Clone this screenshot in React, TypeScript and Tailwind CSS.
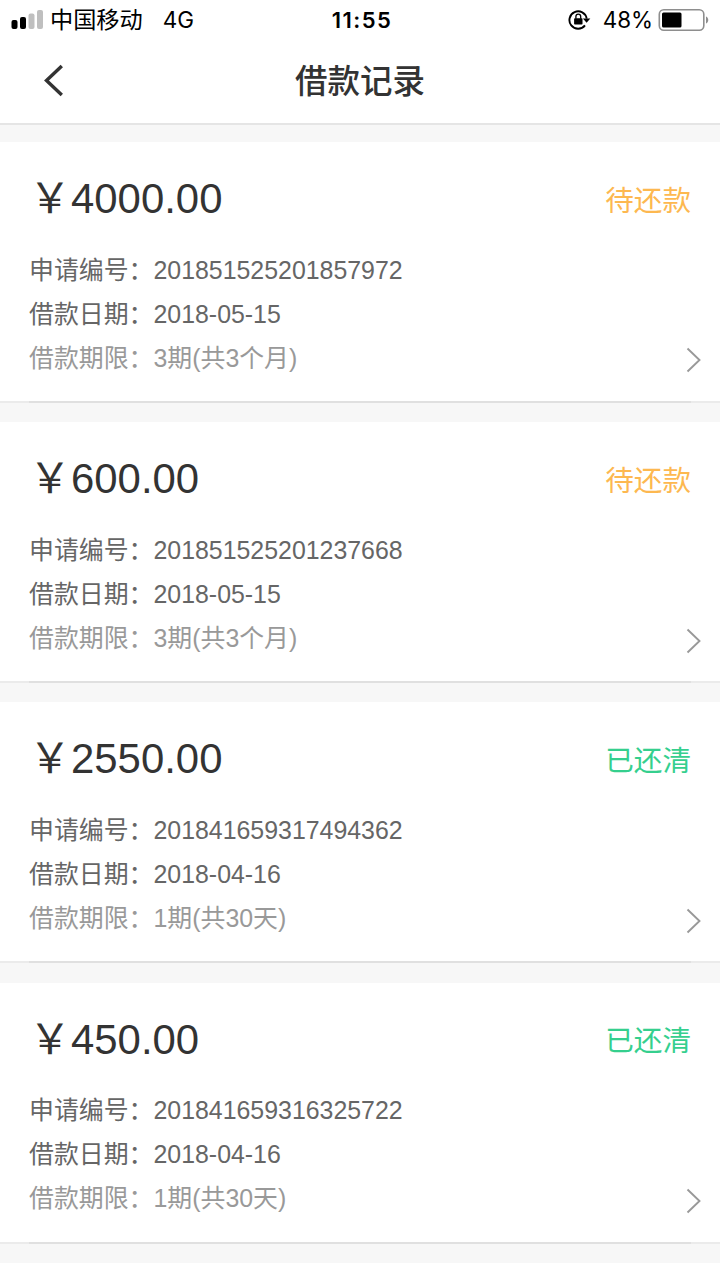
type LoanStatus = "pending" | "cleared";

interface Loan {
  amount: string;
  status: LoanStatus;
  number: string;
  date: string;
  term: string;
}

const loans: Loan[] = [
  { amount: "4000.00", status: "pending", number: "201851525201857972", date: "2018-05-15", term: "3期(共3个月)" },
  { amount: "600.00", status: "pending", number: "201851525201237668", date: "2018-05-15", term: "3期(共3个月)" },
  { amount: "2550.00", status: "cleared", number: "201841659317494362", date: "2018-04-16", term: "1期(共30天)" },
  { amount: "450.00", status: "cleared", number: "201841659316325722", date: "2018-04-16", term: "1期(共30天)" },
];

const statusText = { pending: "待还款", cleared: "已还清" };
const statusColor = { pending: "text-[#fdb850]", cleared: "text-[#35cf8e]" };

function StatusBar() {
  return (
    <div className="flex h-10 items-center justify-between pl-[11px] pr-[10px] font-['Inter','Noto_Sans_CJK_SC',sans-serif] text-[23px] text-black">
      <div className="flex w-[260px] items-center">
        <svg width="33" height="20" viewBox="0 0 33 20">
          <rect x="0.5" y="10" width="6" height="9" rx="2" fill="#000" />
          <rect x="9" y="7" width="6" height="12" rx="2" fill="#000" />
          <rect x="17.5" y="3.5" width="6" height="15.5" rx="2" fill="#bfbfbf" />
          <rect x="26" y="0" width="6" height="19" rx="2" fill="#bfbfbf" />
        </svg>
        <span className="ml-[6px] text-[23.2px]">中国移动</span>
        <span className="ml-[20px] text-[22.5px]">4G</span>
      </div>
      <span className="pl-[3px] text-[22px] font-semibold tracking-[1.4px]">11:55</span>
      <div className="flex w-[260px] items-center justify-end">
        <svg width="23" height="20" viewBox="0 0 23 20" fill="none">
          <path d="M17 15.4A8.7 8.7 0 1 1 18.7 8.6" stroke="#000" strokeWidth="1.9" />
          <path d="M14.9 8.4h7.4L18.6 12.8z" fill="#000" />
          <rect x="6.1" y="8.2" width="8.4" height="6.4" rx="0.8" fill="#000" />
          <path d="M7.9 8.8V6.6a2.4 2.4 0 0 1 4.8 0v2.2" stroke="#000" strokeWidth="1.3" />
        </svg>
        <span className="ml-[12px] text-[22.4px]">48%</span>
        <svg className="ml-[5px]" width="52" height="24" viewBox="0 0 52 24">
          <rect x="1.3" y="1.7" width="44.5" height="20.5" rx="4.5" fill="none" stroke="#8e8e8e" strokeWidth="1.6" />
          <rect x="4" y="4.5" width="19.5" height="15" rx="1.5" fill="#000" />
          <path d="M48 8.5v7c3-1.2 3-5.8 0-7z" fill="#8e8e8e" />
        </svg>
      </div>
    </div>
  );
}

function Header() {
  return (
    <header className="flex h-[85px] items-center border-b-2 border-[#e5e5e5] pb-[2px]">
      <button className="flex w-[110px] pl-[44px]" aria-label="返回">
        <svg width="20" height="34" viewBox="0 0 20 34" fill="none">
          <path d="M17.8 2 2.5 16.5 17.8 31" stroke="#333" strokeWidth="3.4" />
        </svg>
      </button>
      <h1 className="flex-1 pt-1 text-center text-[32.5px] font-medium text-[#333]">借款记录</h1>
      <div className="w-[110px]" />
    </header>
  );
}

function LoanCard({ loan }: { loan: Loan }) {
  return (
    <li className="h-[280.2px]">
      <div className="h-[259px] bg-white px-[29px] pt-[31px]">
        <div className="flex h-[52px] items-center justify-between">
          <p className="flex text-[41.9px] leading-[52px] text-[#333]">
            <span className="w-[42px] text-center">￥</span>
            <span>{loan.amount}</span>
          </p>
          <span className={`pt-[4px] text-[28.6px] ${statusColor[loan.status]}`}>{statusText[loan.status]}</span>
        </div>
        <div className="mt-[22.8px] flex justify-between text-[24.9px] leading-[44px] text-[#666]">
          <div>
            <p className="h-11">申请编号：{loan.number}</p>
            <p className="h-11">借款日期：{loan.date}</p>
            <p className="h-11 text-[#999]">借款期限：{loan.term}</p>
          </div>
          <svg className="-mr-[11px] mt-[99.6px]" width="17" height="26" viewBox="0 0 17 26" fill="none">
            <path d="M2.5 1.5 14.5 13 2.5 24.5" stroke="#999" strokeWidth="1.9" />
          </svg>
        </div>
      </div>
      <div className="h-[2px] bg-[#ebebeb] px-[29px]">
        <div className="h-full bg-[#e0e0e0]" />
      </div>
    </li>
  );
}

function App() {
  return (
    <div className="flex h-[1280px] w-[720px] flex-col overflow-hidden bg-white font-['Liberation_Sans','Noto_Sans_CJK_SC',sans-serif]">
      <StatusBar />
      <Header />
      <ul className="h-[1138px] bg-[#f7f7f7] pt-[17px]">
        {loans.map((loan) => (
          <LoanCard key={loan.number} loan={loan} />
        ))}
      </ul>
      <div className="flex-1 bg-white" />
    </div>
  );
}

export default App;
